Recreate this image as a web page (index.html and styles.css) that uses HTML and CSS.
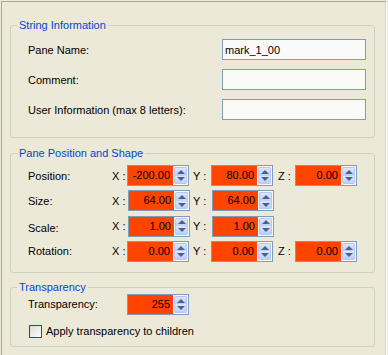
FILE: index.html
```html
<!DOCTYPE html>
<html lang="en">
<head>
    <meta charset="UTF-8">
    <meta name="viewport" content="width=device-width, initial-scale=1.0">
    <title>Pane Properties</title>
    <link rel="stylesheet" href="styles.css">
</head>
<body>

    <div class="panel">

        <fieldset class="group group-info">
            <legend>String Information</legend>
            <div class="info-grid">
                <label>Pane Name:</label>
                <input type="text" class="text-box" value="mark_1_00">
                <label>Comment:</label>
                <input type="text" class="text-box" value="">
                <label>User Information (max 8 letters):</label>
                <input type="text" class="text-box" value="">
            </div>
        </fieldset>

        <fieldset class="group group-shape">
            <legend>Pane Position and Shape</legend>
            <div class="shape-grid">
                <span class="row-label">Position:</span>
                <span class="axis">X :</span>
                <div class="spin"><span class="spin-value">-200.00</span><span class="spin-btns"><i class="up"></i><i class="down"></i></span></div>
                <span class="axis axis-y">Y :</span>
                <div class="spin"><span class="spin-value">80.00</span><span class="spin-btns"><i class="up"></i><i class="down"></i></span></div>
                <span class="axis axis-z">Z :</span>
                <div class="spin"><span class="spin-value">0.00</span><span class="spin-btns"><i class="up"></i><i class="down"></i></span></div>

                <span class="row-label">Size:</span>
                <span class="axis">X :</span>
                <div class="spin shifted"><span class="spin-value">64.00</span><span class="spin-btns"><i class="up"></i><i class="down"></i></span></div>
                <span class="axis axis-y">Y :</span>
                <div class="spin shifted"><span class="spin-value">64.00</span><span class="spin-btns"><i class="up"></i><i class="down"></i></span></div>
                <span></span>
                <span></span>

                <span class="row-label label-low">Scale:</span>
                <span class="axis">X :</span>
                <div class="spin shifted"><span class="spin-value">1.00</span><span class="spin-btns"><i class="up"></i><i class="down"></i></span></div>
                <span class="axis axis-y">Y :</span>
                <div class="spin shifted"><span class="spin-value">1.00</span><span class="spin-btns"><i class="up"></i><i class="down"></i></span></div>
                <span></span>
                <span></span>

                <span class="row-label">Rotation:</span>
                <span class="axis">X :</span>
                <div class="spin"><span class="spin-value">0.00</span><span class="spin-btns"><i class="up"></i><i class="down"></i></span></div>
                <span class="axis axis-y">Y :</span>
                <div class="spin"><span class="spin-value">0.00</span><span class="spin-btns"><i class="up"></i><i class="down"></i></span></div>
                <span class="axis axis-z">Z :</span>
                <div class="spin"><span class="spin-value">0.00</span><span class="spin-btns"><i class="up"></i><i class="down"></i></span></div>
            </div>
        </fieldset>

        <fieldset class="group group-alpha">
            <legend>Transparency</legend>
            <div class="alpha-row">
                <span class="row-label">Transparency:</span>
                <div class="spin"><span class="spin-value">255</span><span class="spin-btns"><i class="up"></i><i class="down"></i></span></div>
            </div>
            <label class="check-row">
                <span class="check-box"></span>
                Apply transparency to children
            </label>
        </fieldset>

    </div>

</body>
</html>
```

FILE: styles.css
```css
body {
    margin: 0;
    background-color: #ece9d8;
    font-family: 'Liberation Sans', Arial, sans-serif;
    font-size: 11px;
    color: #000;
}

.panel {
    margin: 1px 1px 0 1px;
    height: 354px;
    box-sizing: border-box;
    border-top: 1px solid #aca899;
    border-left: 1px solid #aca899;
    border-right: 1px solid #fff;
    box-shadow: inset -1px 0 #d6d3c4;
    overflow: hidden;
}

/* group boxes */
.group {
    margin: 0 11px 0 8px;
    padding: 0;
    border: 1px solid #d0d0bf;
    border-radius: 3px;
    min-width: 0;
}

.group legend {
    margin-left: -11px;
    padding: 0 2px;
    line-height: 13px;
    color: #0046d5;
}

.group-info {
    margin-top: 17px;
    padding: 7px 8px 17px 17px;
}

.group-shape {
    margin-top: 9px;
    padding: 5px 0 10px 17px;
}

.group-alpha {
    margin-top: 8px;
    padding: 0 0 8px 17px;
}

/* string information */
.info-grid {
    display: grid;
    grid-template-columns: 1fr 144px;
    grid-auto-rows: 21px;
    row-gap: 9px;
    align-items: center;
}

.text-box {
    box-sizing: border-box;
    width: 144px;
    height: 21px;
    margin: 0;
    padding: 0 2px;
    border: 1px solid #7f9db9;
    background-color: #f9f9f7;
    font-family: inherit;
    font-size: 11px;
    color: #000;
    outline: none;
}

/* position and shape */
.shape-grid {
    display: grid;
    grid-template-columns: 84px 15px 62px 22px 62px 22px 62px;
    grid-auto-rows: 21px;
    row-gap: 4.33px;
    align-items: center;
}

.row-label {
    white-space: nowrap;
}

.label-low {
    padding-top: 4px;
}

.axis {
    white-space: nowrap;
}

.axis-y {
    padding-left: 4px;
}

.axis-z {
    padding-left: 5px;
}

.spin {
    box-sizing: border-box;
    display: flex;
    width: 62px;
    height: 21px;
    border: 1px solid #7f9db9;
    background-color: #f9f9f7;
}

.spin.shifted {
    margin-left: 1px;
}

.spin-value {
    flex: 1;
    background-color: #ff4400;
    text-align: right;
    padding-right: 3px;
    line-height: 19px;
}

.spin-btns {
    width: 15px;
    box-sizing: border-box;
    padding: 1px;
    display: flex;
    flex-direction: column;
}

.spin-btns i {
    flex: 1;
    display: flex;
    align-items: center;
    justify-content: center;
    background: linear-gradient(#dbe6fe, #bccff9);
    border: 1px solid #b4c8f6;
    border-radius: 2px;
}

.spin-btns .up {
    border-bottom-left-radius: 0;
    border-bottom-right-radius: 0;
    border-bottom: none;
}

.spin-btns .down {
    border-top-left-radius: 0;
    border-top-right-radius: 0;
    border-top: none;
}

.spin-btns .up::after {
    content: "";
    border-left: 4px solid transparent;
    border-right: 4px solid transparent;
    border-bottom: 4px solid #4d6185;
}

.spin-btns .down::after {
    content: "";
    border-left: 4px solid transparent;
    border-right: 4px solid transparent;
    border-top: 4px solid #4d6185;
}

/* transparency */
.alpha-row {
    display: grid;
    grid-template-columns: 99px 62px;
    height: 21px;
    align-items: center;
}

.check-row {
    display: flex;
    align-items: center;
    gap: 4px;
    margin-top: 10px;
    margin-left: 1px;
    height: 13px;
}

.check-box {
    box-sizing: border-box;
    width: 13px;
    height: 13px;
    border: 1px solid #1c5180;
    background: linear-gradient(135deg, #dcdcd7, #fbfbf9);
}
```
